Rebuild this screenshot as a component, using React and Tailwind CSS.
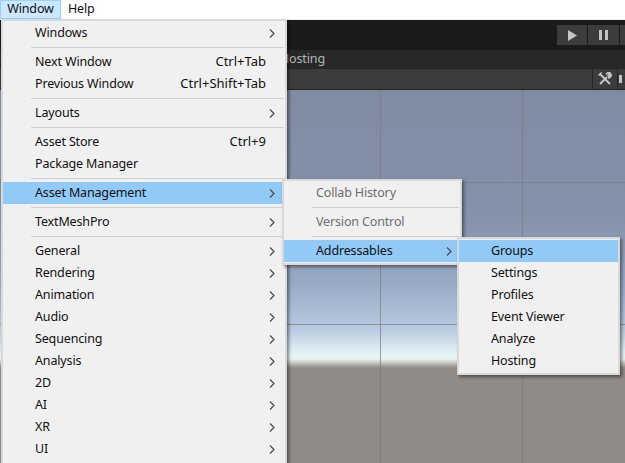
const MAIN = [
	[{ label: "Windows", arrow: true }],
	[
		{ label: "Next Window", shortcut: "Ctrl+Tab" },
		{ label: "Previous Window", shortcut: "Ctrl+Shift+Tab" },
	],
	[{ label: "Layouts", arrow: true }],
	[{ label: "Asset Store", shortcut: "Ctrl+9" }, { label: "Package Manager" }],
	[{ label: "Asset Management", arrow: true, active: true }],
	[{ label: "TextMeshPro", arrow: true }],
	[
		{ label: "General", arrow: true },
		{ label: "Rendering", arrow: true },
		{ label: "Animation", arrow: true },
		{ label: "Audio", arrow: true },
		{ label: "Sequencing", arrow: true },
		{ label: "Analysis", arrow: true },
		{ label: "2D", arrow: true },
		{ label: "AI", arrow: true },
		{ label: "XR", arrow: true },
		{ label: "UI", arrow: true },
	],
];

const ASSET = [
	[{ label: "Collab History", disabled: true }],
	[{ label: "Version Control", disabled: true }],
	[{ label: "Addressables", arrow: true, active: true }],
];

const ADDRESSABLES = [
	[
		{ label: "Groups", active: true },
		{ label: "Settings" },
		{ label: "Profiles" },
		{ label: "Event Viewer" },
		{ label: "Analyze" },
		{ label: "Hosting" },
	],
];

function Chevron() {
	return (
		<svg width="6" height="9" viewBox="0 0 6 9" fill="none" stroke="#4a4a4a" strokeWidth="1.2" className="block">
			<path d="M1 0.5 L5 4.5 L1 8.5" />
		</svg>
	);
}

function MenuRow({ item, textLeft, arrowRight, shortcutRight }) {
	return (
		<div className={`relative h-[22px] flex items-center ${item.active ? "bg-[#91c9f7]" : ""}`}>
			<span className={`absolute whitespace-nowrap ${textLeft} ${item.disabled ? "text-[#6d6d6d]" : "text-[#101010]"}`}>
				{item.label}
			</span>
			{item.shortcut && (
				<span className={`absolute whitespace-nowrap text-[13px] tracking-normal text-[#101010] ${shortcutRight}`}>{item.shortcut}</span>
			)}
			{item.arrow && (
				<span className={`absolute ${arrowRight}`}>
					<Chevron />
				</span>
			)}
		</div>
	);
}

function Menu({ groups, className, textLeft, sepLeft, arrowRight, shortcutRight = "" }) {
	return (
		<div className={`absolute bg-[#f0f0f0] border-2 border-[#d9d9d9] pt-px shadow-[2px_2px_3px_rgba(0,0,0,0.45)] ${className}`}>
			{groups.map((group, i) => (
				<div key={i}>
					{i > 0 && (
						<div className="h-[7px] flex items-center">
							<div className={`h-px w-full bg-[#cfcfcf] ${sepLeft}`} />
						</div>
					)}
					{group.map((item) => (
						<MenuRow key={item.label} item={item} textLeft={textLeft} arrowRight={arrowRight} shortcutRight={shortcutRight} />
					))}
				</div>
			))}
		</div>
	);
}

function Scene() {
	return (
		<div className="relative flex-1 bg-[linear-gradient(to_bottom,#7f8ba1_0px,#8492aa_130px,#9aabc6_195px,#b9cbe2_240px,#e6f4f6_264px,#e9f3f1_269px,#8f8a86_278px,#8f8a86_100%)]">
			<svg className="absolute inset-0 w-full h-full" fill="none" stroke="#7a7a7a" strokeOpacity="0.7">
				<path d="M380.5 0 V373 M522.5 0 V373 M0 92.5 H625 M0 234.5 H625" />
			</svg>
		</div>
	);
}

export default function App() {
	return (
		<div
			className="relative w-[625px] h-[463px] overflow-hidden bg-white text-[12.5px] tracking-[-0.15px] antialiased"
			style={{ fontFamily: '"Noto Sans", "Open Sans", sans-serif' }}
		>
			<div className="h-[19px] flex items-center bg-white text-[#101010]">
				<div className="h-[19px] w-[61px] flex items-center justify-center bg-[#cce8ff] border border-[#99d1ff]">Window</div>
				<div className="ml-[7px]">Help</div>
			</div>
			<div className="h-px bg-[#f0f0f0]" />
			<div className="h-[443px] flex flex-col">
				<div className="h-[30px] shrink-0 bg-[#1a1a1a] flex items-center justify-end gap-px">
					<div className="w-[30px] h-[20px] bg-[#3c3c3c] flex items-center justify-center">
						<svg width="11" height="11" viewBox="0 0 11 11" fill="#c4c4c4">
							<path d="M1 0 L10 5.5 L1 11 Z" />
						</svg>
					</div>
					<div className="w-[31px] h-[20px] bg-[#3c3c3c] flex items-center justify-center">
						<svg width="9" height="10" viewBox="0 0 9 10" fill="#c4c4c4">
							<path d="M0 0 H3 V10 H0 Z M6 0 H9 V10 H6 Z" />
						</svg>
					</div>
					<div className="w-[5px] h-[20px] bg-[#3c3c3c]" />
				</div>
				<div className="h-[18px] shrink-0 bg-[#282828] flex items-center pl-[280px] text-[#b4b4b4]">Hosting</div>
				<div className="h-[22px] shrink-0 bg-[#3c3c3c] border-y border-[#232323] flex items-stretch justify-end">
					<div className="w-[26px] border-x border-[#232323] flex items-center justify-center">
						<svg width="14" height="14" viewBox="0 0 14 14" fill="none" stroke="#c4c4c4">
							<path strokeWidth="2" d="M2 12 L9 5" />
							<path strokeWidth="1.6" d="M8 2.5 C9 1 11 0.5 12 1 L10 3.5 L11 4.5 L13 2.5 C13.5 4 12.5 6 10 6" />
							<path strokeWidth="2" d="M2 2 L12 12" />
							<path strokeWidth="1.5" d="M0.5 3.5 L3.5 0.5" />
						</svg>
					</div>
					<div className="w-[7px] flex items-center">
						<div className="w-[3px] h-[8px] bg-[#c4c4c4] ml-px" />
					</div>
				</div>
				<Scene />
			</div>

			<Menu
				groups={MAIN}
				className="left-px top-[19px] w-[286px] h-[446px]"
				textLeft="left-[32px]"
				sepLeft="ml-[28px] mr-px w-auto"
				arrowRight="right-[10px]"
				shortcutRight="right-[19px]"
			/>
			<Menu
				groups={ASSET}
				className="left-[282px] top-[179px] w-[180px] h-[86px]"
				textLeft="left-[32px]"
				sepLeft="ml-[28px] mr-px w-auto"
				arrowRight="right-[8px]"
			/>
			<Menu
				groups={ADDRESSABLES}
				className="left-[457px] top-[237px] w-[163px] h-[138px]"
				textLeft="left-[32px]"
				sepLeft="ml-[28px]"
				arrowRight="right-[8px]"
			/>
		</div>
	);
}
